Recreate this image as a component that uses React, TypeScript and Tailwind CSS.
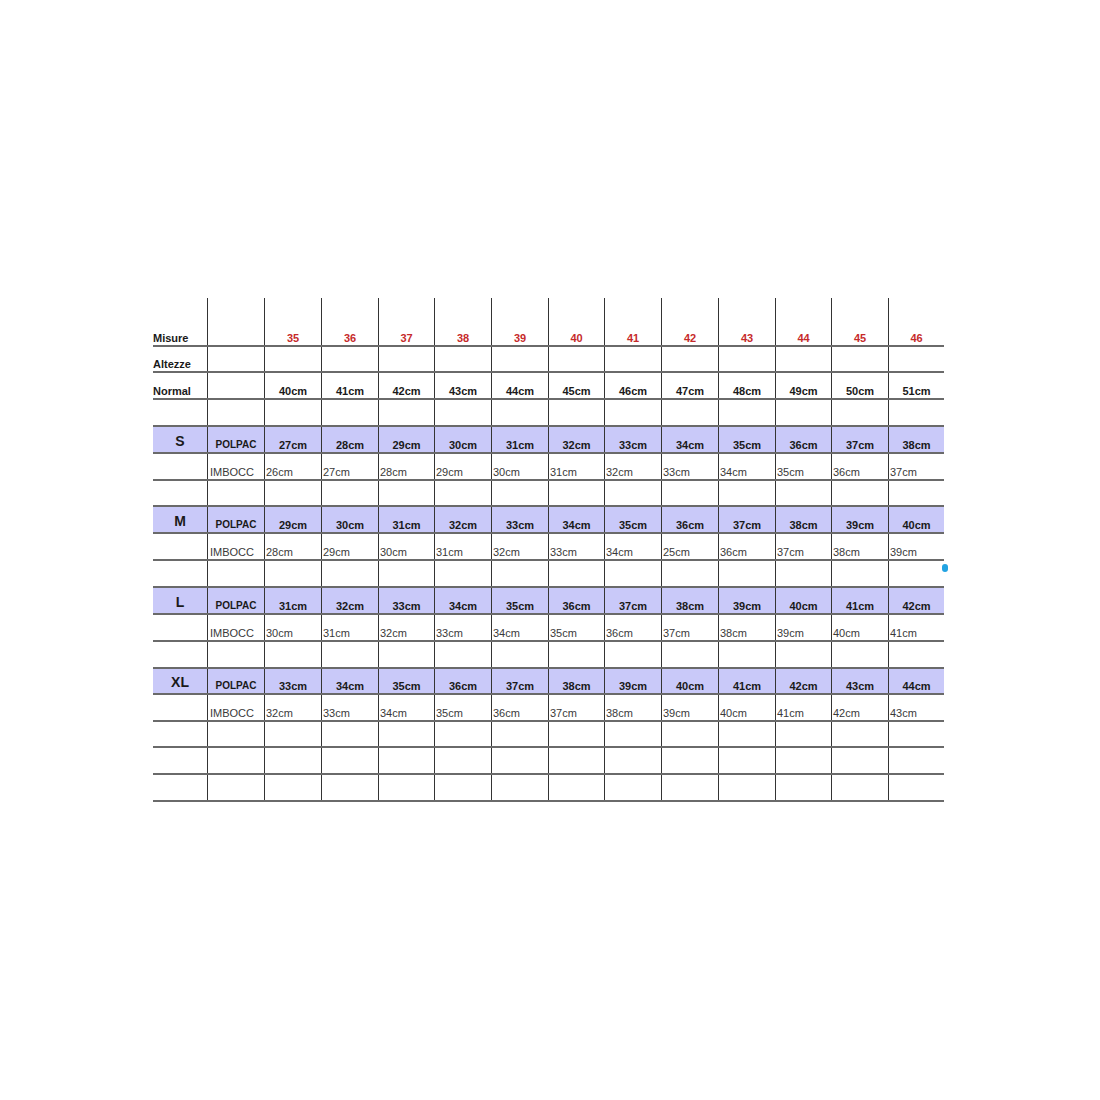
import React from "react";

const COLS = "grid-cols-[55px_57px_57px_57px_56px_57px_57px_56px_57px_57px_57px_56px_57px_55px]";
const sizes = ["35","36","37","38","39","40","41","42","43","44","45","46"];
const range = (start: number) => Array.from({ length: 12 }, (_, i) => `${start + i}cm`);

type Row = {
  h: string;
  kind: "head" | "label" | "blank" | "band" | "imb";
  label?: string;
  values?: string[];
  dot?: boolean;
};

const mImb = ["28cm","29cm","30cm","31cm","32cm","33cm","34cm","25cm","36cm","37cm","38cm","39cm"];

const rows: Row[] = [
  { h: "h-[49px]", kind: "head", label: "Misure", values: sizes },
  { h: "h-[26px]", kind: "label", label: "Altezze" },
  { h: "h-[27px]", kind: "label", label: "Normal", values: range(40) },
  { h: "h-[27px]", kind: "blank" },
  { h: "h-[27px]", kind: "band", label: "S", values: range(27) },
  { h: "h-[27px]", kind: "imb", values: range(26) },
  { h: "h-[26px]", kind: "blank" },
  { h: "h-[27px]", kind: "band", label: "M", values: range(29) },
  { h: "h-[27px]", kind: "imb", values: mImb },
  { h: "h-[27px]", kind: "blank", dot: true },
  { h: "h-[27px]", kind: "band", label: "L", values: range(31) },
  { h: "h-[27px]", kind: "imb", values: range(30) },
  { h: "h-[27px]", kind: "blank" },
  { h: "h-[26px]", kind: "band", label: "XL", values: range(33) },
  { h: "h-[27px]", kind: "imb", values: range(32) },
  { h: "h-[26px]", kind: "blank" },
  { h: "h-[27px]", kind: "blank" },
  { h: "h-[27px]", kind: "blank" },
];

function Cell({ children, last, className = "" }: { children?: React.ReactNode; last?: boolean; className?: string }) {
  return (
    <div className={`relative flex items-end pb-[1px] leading-[12px] ${last ? "" : "border-r border-[#343434]"} ${className}`}>
      {children}
    </div>
  );
}

function TableRow({ r }: { r: Row }) {
  const band = r.kind === "band";
  return (
    <div className={`grid ${COLS} ${r.h} ${band ? "bg-[#c9c9f9]" : ""} border-b-2 border-[#6a6a6a]`}>
      {r.kind === "head" || r.kind === "label" ? (
        <Cell className="text-[11px] font-bold text-[#1a1a1a]">{r.label}</Cell>
      ) : band ? (
        <Cell className="justify-center text-[14px] font-bold text-[#1a1a1a] leading-[14px]">
          <span className="mb-[3px]">{r.label}</span>
        </Cell>
      ) : (
        <Cell />
      )}
      {band ? (
        <Cell className="justify-center text-[10px] font-bold text-[#1a1a1a]">POLPAC</Cell>
      ) : r.kind === "imb" ? (
        <Cell className="pl-[2px] text-[11px] text-[#3a3a3a]">IMBOCC</Cell>
      ) : (
        <Cell />
      )}
      {Array.from({ length: 12 }, (_, i) => {
        const last = i === 11;
        const v = r.values?.[i];
        if (r.kind === "head") {
          return (
            <Cell key={i} last={last} className="justify-center text-[11px] font-bold text-[#c62a2a]">
              {v}
            </Cell>
          );
        }
        if (r.kind === "imb") {
          return (
            <Cell key={i} last={last} className="pl-[1px] text-[11px] text-[#3a3a3a]">
              {v}
            </Cell>
          );
        }
        if (v) {
          return (
            <Cell key={i} last={last} className="justify-center text-[11px] font-bold text-[#1a1a1a]">
              {v}
            </Cell>
          );
        }
        return (
          <Cell key={i} last={last}>
            {last && r.dot ? (
              <span className="absolute right-[-4px] top-[3px] h-[8px] w-[6px] rounded-full bg-[#22a3e2]" />
            ) : null}
          </Cell>
        );
      })}
    </div>
  );
}

export default function App() {
  return (
    <div className="w-[1100px] h-[1100px] bg-white" style={{ fontFamily: '"Liberation Sans", Arial, sans-serif' }}>
      <div className="pt-[298px] pl-[153px]">
        <div className="w-[791px]">
          {rows.map((r, i) => (
            <TableRow key={i} r={r} />
          ))}
        </div>
      </div>
    </div>
  );
}
